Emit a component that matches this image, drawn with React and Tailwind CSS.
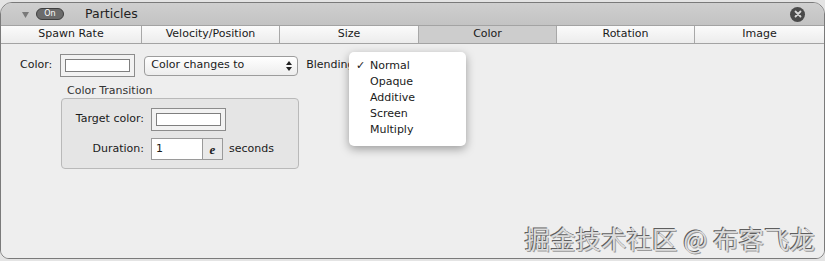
import React from "react";

const TABS = [
  { label: "Spawn Rate", w: "w-[140px]" },
  { label: "Velocity/Position", w: "w-[138px]" },
  { label: "Size", w: "w-[139px]" },
  { label: "Color", w: "w-[138px]", active: true },
  { label: "Rotation", w: "w-[138px]" },
  { label: "Image", w: "flex-1" },
];

const BLEND_MODES = ["Normal", "Opaque", "Additive", "Screen", "Multiply"];

function ColorWell({ className = "" }) {
  return (
    <div className={`flex h-[23px] w-[75px] items-center justify-center border border-[#8c8c8c] bg-[#f2f2f2] ${className}`}>
      <div className="h-[13px] w-[65px] border border-[#7f7f7f] bg-white" />
    </div>
  );
}

function UpDownArrows() {
  return (
    <svg width="6" height="10" viewBox="0 0 6 10" fill="#222">
      <path d="M3 0 L6 4 L0 4 Z" />
      <path d="M0 6 L6 6 L3 10 Z" />
    </svg>
  );
}

export default function App() {
  return (
    <div
      className="relative h-[261px] w-[825px] overflow-hidden bg-[#e4e4e4] pt-[2px] text-[11px] text-[#1a1a1a]"
      style={{ fontFamily: '"DejaVu Sans", "Noto Sans CJK SC", sans-serif' }}
    >
      <div className="flex h-[257px] w-[825px] flex-col overflow-hidden rounded-t-[12px] rounded-b-[9px] border border-[#7a7a7a] bg-[#ededed]">
        {/* title bar */}
        <div className="flex h-[22px] items-center bg-gradient-to-b from-[#cfcfcf] to-[#c3c3c3] pl-[21px] pr-[19px]">
          <svg width="7" height="6" viewBox="0 0 7 6" className="mt-[1px]">
            <path d="M0 0 L7 0 L3.5 6 Z" fill="#7a7a7a" />
          </svg>
          <div className="ml-[7px] flex h-[12px] w-[28px] items-center justify-center rounded-full border border-[#3e3e3e] bg-[#6b6b6b] text-[8px] leading-none text-white">
            On
          </div>
          <span className="ml-[21px] text-[12.5px] text-[#222]">Particles</span>
          <div className="ml-auto flex h-[15px] w-[15px] items-center justify-center rounded-full bg-[#4a4a4a]">
            <svg width="8" height="8" viewBox="0 0 8 8">
              <path d="M1.5 1.5 L6.5 6.5 M6.5 1.5 L1.5 6.5" stroke="#d8d8d8" strokeWidth="1.8" strokeLinecap="round" />
            </svg>
          </div>
        </div>

        {/* tabs */}
        <div className="flex h-[19px] border-y border-[#a3a3a3]">
          {TABS.map((t, i) => (
            <div
              key={t.label}
              className={`${t.w} flex items-center justify-center text-[11px] ${i > 0 ? "border-l border-[#a8a8a8]" : ""} ${
                t.active ? "bg-[#cdcdcd]" : "bg-gradient-to-b from-[#fbfbfb] to-[#ececec]"
              }`}
            >
              {t.label}
            </div>
          ))}
        </div>

        {/* content */}
        <div className="relative flex-1 bg-[#eeeeee] pl-[19px] pt-[10px]">
          <div className="flex h-[23px] items-center">
            <span>Color:</span>
            <ColorWell className="ml-[8px]" />
            <div className="ml-[9px] flex h-[20px] w-[154px] items-center justify-between rounded-[4px] border border-[#9c9c9c] bg-gradient-to-b from-white to-[#ededed] pl-[6px] pr-[5px]">
              <span>Color changes to</span>
              <UpDownArrows />
            </div>
            <span className="ml-[8px]">Blending</span>
            <div className="ml-[1px] h-[20px] w-[108px] rounded-[4px] border border-[#9c9c9c] bg-gradient-to-b from-white to-[#e8e8e8]" />
          </div>

          <div className="ml-[41px] mt-[6px]">
            <div className="pl-[6px] leading-[15px] text-[#333]">Color Transition</div>
            <div className="h-[71px] w-[238px] rounded-[4px] border border-[#b9b9b9] bg-[#e5e5e5] pt-[9px]">
              <div className="flex h-[23px] items-center">
                <span className="w-[82px] text-right">Target color:</span>
                <ColorWell className="ml-[7px]" />
              </div>
              <div className="mt-[7px] flex h-[22px] items-center">
                <span className="w-[82px] text-right">Duration:</span>
                <div className="ml-[7px] flex h-[22px] w-[72px] border border-[#9a9a9a] bg-white">
                  <span className="flex-1 pl-[4px] leading-[20px]">1</span>
                  <div className="flex w-[20px] items-center justify-center border-l border-[#9a9a9a] bg-[#e9e9e9]">
                    <span className="font-bold italic text-[13px] leading-none text-[#222]" style={{ fontFamily: '"Liberation Serif", serif' }}>e</span>
                  </div>
                </div>
                <span className="ml-[6px]">seconds</span>
              </div>
            </div>
          </div>

          {/* blending menu */}
          <div className="absolute left-[348px] top-[8px] w-[117px] rounded-[5px] bg-white pb-[8px] pt-[6px] shadow-[0_3px_10px_rgba(0,0,0,0.35)]">
            {BLEND_MODES.map((m, i) => (
              <div key={m} className="flex h-[16px] items-center">
                <span className="w-[21px] pl-[7px] text-[11px]">{i === 0 ? "✓" : ""}</span>
                <span>{m}</span>
              </div>
            ))}
          </div>

          {/* watermark */}
          <div
            className="absolute bottom-[8px] right-[9px] text-[25.5px] leading-none text-[#dcdcdc] [text-shadow:-1px_-1px_0_#5e5e5e,1px_1px_0_#9a9a9a]"
            style={{ fontFamily: '"Noto Sans CJK SC", sans-serif' }}
          >
            掘金技术社区 @ 布客飞龙
          </div>
        </div>
      </div>
    </div>
  );
}
